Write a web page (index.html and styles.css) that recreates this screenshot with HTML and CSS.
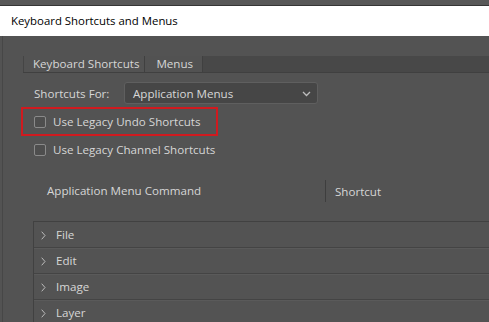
FILE: index.html
```html
<!DOCTYPE html>
<html lang="en">

<head>
    <meta charset="UTF-8">
    <title>Keyboard Shortcuts and Menus</title>
    <link rel="stylesheet" href="styles.css">
</head>

<body>
    <div class="top-strip"></div>
    <div class="dialog">
        <div class="title-bar">Keyboard Shortcuts and Menus</div>

        <div class="content">
            <!-- Tabs -->
            <div class="tabs">
                <div class="tab active">Keyboard Shortcuts</div>
                <div class="tab">Menus</div>
            </div>

            <!-- Shortcuts for -->
            <div class="shortcuts-for">
                <span class="field-label">Shortcuts For:</span>
                <div class="select">
                    <span>Application Menus</span>
                    <svg class="select-arrow" width="9" height="6" viewBox="0 0 9 6">
                        <path d="M1 1 L4.5 4.5 L8 1" fill="none" stroke="#bdbdbd" stroke-width="1.3" />
                    </svg>
                </div>
            </div>

            <!-- Options -->
            <label class="option highlight"><span class="checkbox"></span>Use Legacy Undo Shortcuts</label>
            <label class="option"><span class="checkbox"></span>Use Legacy Channel Shortcuts</label>

            <!-- Table -->
            <div class="table-header">
                <div class="col-command">Application Menu Command</div>
                <div class="col-shortcut">Shortcut</div>
            </div>

            <div class="menu-list">
                <div class="menu-row"><svg class="arrow" width="5" height="9" viewBox="0 0 5 9"><path d="M0.7 0.7 L4 4.5 L0.7 8.3" fill="none" stroke="#bcbcbc" stroke-width="1"/></svg>File</div>
                <div class="menu-row"><svg class="arrow" width="5" height="9" viewBox="0 0 5 9"><path d="M0.7 0.7 L4 4.5 L0.7 8.3" fill="none" stroke="#bcbcbc" stroke-width="1"/></svg>Edit</div>
                <div class="menu-row"><svg class="arrow" width="5" height="9" viewBox="0 0 5 9"><path d="M0.7 0.7 L4 4.5 L0.7 8.3" fill="none" stroke="#bcbcbc" stroke-width="1"/></svg>Image</div>
                <div class="menu-row"><svg class="arrow" width="5" height="9" viewBox="0 0 5 9"><path d="M0.7 0.7 L4 4.5 L0.7 8.3" fill="none" stroke="#bcbcbc" stroke-width="1"/></svg>Layer</div>
            </div>
        </div>
    </div>
</body>

</html>
```

FILE: styles.css
```css
body {
    margin: 0;
    background-color: #535353;
    font-family: 'Open Sans', 'Noto Sans', sans-serif;
    font-size: 11.6px;
    color: #d6d6d6;
    overflow: hidden;
}

.top-strip {
    height: 5px;
    background-color: #585858;
    border-bottom: 1px solid #353535;
}

.dialog {
    margin-left: 2px;
    border-left: 1px solid #474747;
    height: 316px;
}

.title-bar {
    height: 30px;
    line-height: 29px;
    font-size: 11.4px;
    background-color: #ffffff;
    color: #000000;
    margin-left: -3px;
    padding-left: 11px;
}

.content {
    padding-top: 20px;
}

.tabs {
    display: flex;
    margin-left: 20px;
    height: 16px;
    background-color: #484848;
    border-bottom: 1px solid #404040;
}

.tab {
    line-height: 16px;
    padding: 0 9px 0 11px;
    border-right: 1px solid #404040;
    background-color: #525252;
}

.tab.active {
    background-color: #535353;
    border-left: 1px solid #454545;
    padding-left: 9px;
    padding-right: 5px;
}

.shortcuts-for {
    display: flex;
    align-items: center;
    margin-top: 9px;
    margin-left: 31px;
}

.field-label {
    width: 90px;
}

.select {
    width: 178px;
    height: 20px;
    display: flex;
    align-items: center;
    justify-content: space-between;
    padding: 0 6px 0 8px;
    background-color: #464646;
    border: 1px solid #5f5f5f;
    border-radius: 3px;
}

.select-arrow {
    margin-top: 2px;
}

.option {
    display: flex;
    align-items: center;
    height: 25px;
    margin-left: 18px;
    padding-left: 11px;
    border: 2px solid transparent;
}

.option.highlight {
    margin-top: 3px;
    width: 182px;
    border-color: #d01a1f;
}

.option + .option {
    margin-top: -1px;
}

.checkbox {
    width: 10px;
    height: 10px;
    border: 1px solid #8a8a8a;
    border-radius: 2px;
    background-color: #4e4e4e;
    margin-right: 7px;
}

.table-header {
    display: flex;
    align-items: center;
    margin-top: 16px;
    height: 22px;
}

.col-command {
    width: 278px;
    padding-left: 44px;
    border-right: 1px solid #3e3e3e;
    line-height: 22px;
}

.col-shortcut {
    padding-left: 9px;
}

.menu-list {
    margin-top: 19px;
    margin-left: 30px;
    border-left: 1px solid #414141;
    border-top: 1px solid #414141;
}

.menu-row {
    display: flex;
    align-items: center;
    height: 25px;
    border-bottom: 1px solid #444444;
    box-shadow: 0 1px 0 #5a5a5a;
}

.arrow {
    margin: 2px 10px 0 7px;
}
```
